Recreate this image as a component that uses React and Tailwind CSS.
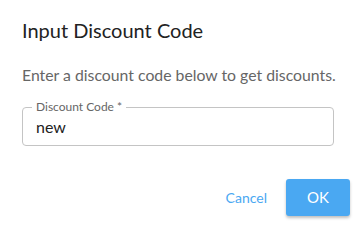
import React from "react";

export default function App() {
  return (
    <div
      className="h-[225px] w-[356px] overflow-hidden bg-white"
      style={{ fontFamily: "Lato, 'Open Sans', sans-serif" }}
    >
      <div className="flex flex-col px-[22px] pt-[18px]">
        <h2 className="text-[20px] leading-[24px] font-normal text-[#222]">
          Input Discount Code
        </h2>

        <p className="mt-[23px] text-[15.8px] leading-[20px] text-[#666] whitespace-nowrap">
          Enter a discount code below to get discounts.
        </p>

        {/* Outlined text field */}
        <fieldset className="mt-[22px] h-[45px] w-[312px] rounded-[4px] border border-[#c4c4c4] px-[9px] -translate-y-[6px]">
          <legend className="px-[4px] text-[12px] leading-[12px] text-[#666]">
            Discount Code *
          </legend>
          <div className="pl-[4px] pt-[4px] text-[16px] leading-[20px] text-[#222]">
            new
          </div>
        </fieldset>

        <div className="mt-[27px] flex items-center justify-end gap-[10px] -mr-[16px]">
          <button className="h-[37px] rounded-[3px] px-[9px] text-[14px] text-[#4aa8f2]">
            Cancel
          </button>
          <button className="h-[37px] w-[64px] rounded-[3px] bg-[#4aa8f2] text-[15px] text-white shadow-[0_2px_3px_rgba(0,0,0,0.25)]">
            OK
          </button>
        </div>
      </div>
    </div>
  );
}
